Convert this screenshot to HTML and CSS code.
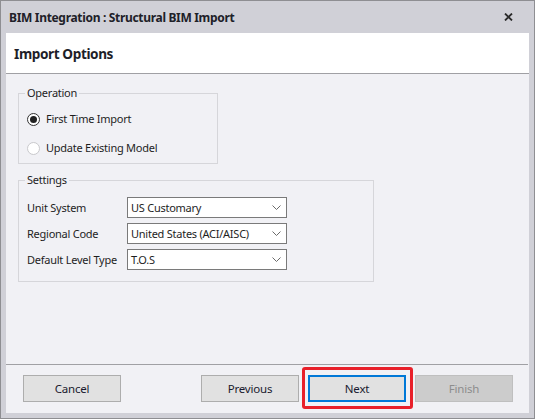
FILE: index.html
```html
<!DOCTYPE html>
<html>
<head>
<meta charset="utf-8">
<link rel="stylesheet" href="styles.css">
</head>
<body>
<div class="window">
  <div class="titlebar">
    <span class="title">BIM Integration : Structural BIM Import</span>
    <span class="close"><svg width="9" height="8" viewBox="0 0 9 8"><path d="M1 0.5 L8 7.5 M8 0.5 L1 7.5" stroke="#2b2b2b" stroke-width="1.8" fill="none"/></svg></span>
  </div>
  <div class="client">
    <div class="header">Import Options</div>
    <div class="body">
      <fieldset class="group group-op">
        <legend>Operation</legend>
        <div class="radio-row first"><span class="radio checked"></span><span class="radio-text">First Time Import</span></div>
        <div class="radio-row second"><span class="radio disabled"></span><span class="radio-text">Update Existing Model</span></div>
      </fieldset>
      <fieldset class="group group-settings">
        <legend>Settings</legend>
        <div class="field-row">
          <span class="field-label">Unit System</span>
          <div class="combo"><span class="combo-text">US Customary</span><svg class="chev" width="9" height="5" viewBox="0 0 9 5"><path d="M0.5 0.5 L4.5 4.5 L8.5 0.5" stroke="#6a6a6a" stroke-width="1" fill="none"/></svg></div>
        </div>
        <div class="field-row">
          <span class="field-label">Regional Code</span>
          <div class="combo"><span class="combo-text">United States (ACI/AISC)</span><svg class="chev" width="9" height="5" viewBox="0 0 9 5"><path d="M0.5 0.5 L4.5 4.5 L8.5 0.5" stroke="#6a6a6a" stroke-width="1" fill="none"/></svg></div>
        </div>
        <div class="field-row">
          <span class="field-label">Default Level Type</span>
          <div class="combo"><span class="combo-text">T.O.S</span><svg class="chev" width="9" height="5" viewBox="0 0 9 5"><path d="M0.5 0.5 L4.5 4.5 L8.5 0.5" stroke="#6a6a6a" stroke-width="1" fill="none"/></svg></div>
        </div>
      </fieldset>
    </div>
    <div class="footer">
      <button class="btn cancel">Cancel</button>
      <button class="btn">Previous</button>
      <button class="btn next">Next<span class="highlight"></span></button>
      <button class="btn disabled">Finish</button>
    </div>
  </div>
</div>
</body>
</html>
```
FILE: styles.css
```css
* { box-sizing: border-box; }
html, body { margin: 0; padding: 0; background: #ffffff; }
body {
  font-family: "Noto Sans", "Open Sans", sans-serif;
  font-size: 11px;
  letter-spacing: -0.25px;
  color: #1e1e1e;
}

.window {
  width: 535px;
  height: 419px;
  border: 1px solid #8e8e92;
  background: #d0d0d7;
  display: flex;
  flex-direction: column;
}

.titlebar {
  height: 32px;
  flex: 0 0 32px;
  display: flex;
  align-items: center;
  padding: 0 21px 0 8px;
}
.title {
  font-weight: bold;
  font-size: 12px;
  color: #202028;
  flex: 1;
  letter-spacing: -0.32px;
}
.close { display: flex; align-items: center; }

.client {
  flex: 1;
  margin: 0 5px 5px 5px;
  background: #f1f1f5;
  display: flex;
  flex-direction: column;
}

.header {
  height: 41px;
  flex: 0 0 41px;
  background: #ffffff;
  border-bottom: 1px solid #a0a0a4;
  display: flex;
  align-items: center;
  padding-left: 8px;
  font-size: 13.6px;
  font-weight: bold;
  color: #1e1e28;
  letter-spacing: -0.4px;
}

.body {
  flex: 1;
  padding: 11px 0 0 12px;
  display: flex;
  flex-direction: column;
  align-items: flex-start;
}

.group {
  margin: 0;
  min-width: 0;
  border: 1px solid #d6d6da;
  padding: 0 6px;
}
.group legend {
  padding: 0 2px;
  line-height: 16px;
  color: #1e1e1e;
}
.group-op { width: 200px; padding-bottom: 7px; }
.group-settings { width: 356px; margin-top: 8px; padding-bottom: 11px; }

.radio-row {
  display: flex;
  align-items: center;
  height: 16px;
  padding-left: 2px;
}
.radio-row.first { margin-top: 10px; }
.radio-row.second { margin-top: 13px; }
.radio {
  width: 13px;
  height: 13px;
  border-radius: 50%;
  border: 1px solid #333333;
  background: #ffffff;
  margin-right: 6px;
  display: flex;
  align-items: center;
  justify-content: center;
}
.radio.checked::after {
  content: "";
  width: 7px;
  height: 7px;
  border-radius: 50%;
  background: #222222;
}
.radio.disabled { border-color: #c9c9cc; }
.radio-text { line-height: 16px; }

.field-row {
  display: flex;
  align-items: center;
  height: 21px;
  margin-top: 5px;
}
.field-row:first-of-type { margin-top: 9px; }
.field-label {
  flex: 0 0 102px;
  padding-left: 2px;
  white-space: nowrap;
}
.combo {
  width: 160px;
  height: 21px;
  border: 1px solid #7a7a7a;
  background: #ffffff;
  display: flex;
  align-items: center;
  padding: 0 5px 0 3px;
}
.combo-text { flex: 1; white-space: nowrap; }
.chev { display: block; }

.footer {
  flex: 0 0 49px;
  border-top: 1px solid #a0a0a4;
  margin-right: 1px;
  display: flex;
  align-items: flex-start;
  padding: 10px 15px 0 17px;
  gap: 9px;
}
.btn {
  position: relative;
  width: 98px;
  height: 27px;
  background: #e1e1e1;
  border: 1px solid #adadad;
  font-family: inherit;
  font-size: 11.5px;
  letter-spacing: -0.2px;
  color: #1a1a2e;
  padding: 0;
}
.btn.cancel { margin-right: auto; }
.btn.next { border: 2px solid #0078d7; }
.btn.disabled { background: #cccccc; border-color: #bfbfbf; color: #8d8d8d; }
.highlight {
  position: absolute;
  left: -8px;
  right: -9px;
  top: -10px;
  bottom: -9px;
  border: 3px solid #e8202a;
  border-radius: 3px;
}
```
